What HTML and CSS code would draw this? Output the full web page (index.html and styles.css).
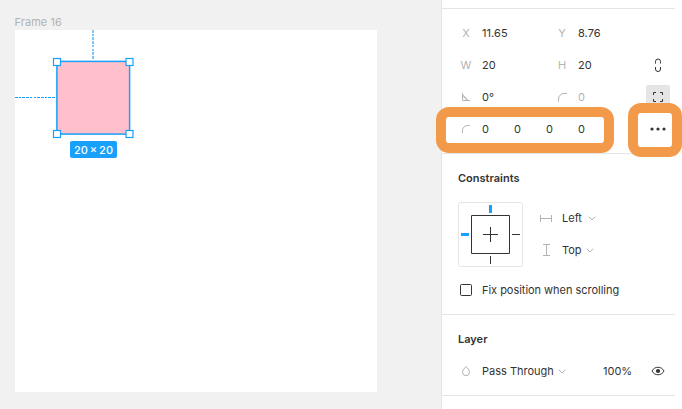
FILE: index.html
```html
<!DOCTYPE html>
<html lang="en">
<head>
<meta charset="utf-8">
<title>Frame 16</title>
<link rel="stylesheet" href="styles.css">
</head>
<body>
<div class="app">
  <main class="canvas">
    <div class="frame-name">Frame 16</div>
    <div class="frame">
      <i class="guide-v"></i>
      <i class="guide-h"></i>
      <svg class="selection" width="362" height="362">
        <rect class="shape" x="41.900" y="31.400" width="72.700" height="72.700"/>
        <rect class="handle" x="38.500" y="28.500" width="7" height="7"/>
        <rect class="handle" x="111" y="28.500" width="7" height="7"/>
        <rect class="handle" x="38.500" y="100.500" width="7" height="7"/>
        <rect class="handle" x="111" y="100.500" width="7" height="7"/>
      </svg>
      <span class="size-badge">20 × 20</span>
    </div>
  </main>
  <aside class="panel">
    <section class="section transform">
      <div class="row"><span class="label">X</span><span class="value">11.65</span><span class="label">Y</span><span class="value">8.76</span></div>
      <div class="row"><span class="label">W</span><span class="value">20</span><span class="label">H</span><span class="value">20</span>
        <span class="button"><svg width="24" height="24"><path class="dark" d="M9.5 10.500V8.500a2.500 2.500 0 0 1 5 0V10.500M9.500 14v2a2.500 2.500 0 0 0 5 0V14"/></svg></span></div>
      <div class="row"><span class="label"><svg width="10" height="10"><path class="light" d="M1.500 1V8.500H9M1.500 4.500a4 4 0 0 1 4 4M1.500 2.500L7 8.500"/></svg></span><span class="value">0°</span><span class="label"><svg width="10" height="10"><path class="light" d="M1.500 9.500V7A5.500 5.500 0 0 1 7 1.500H10"/></svg></span><span class="value muted">0</span>
        <span class="button active"><svg width="24" height="24"><path class="dark" d="M7.500 10V7.500H10M14 7.500H16.500V10M16.500 14V16.500H14M10 16.500H7.500V14"/></svg></span></div>
      <div class="row corners"><span class="label"><svg width="10" height="10"><path class="light" d="M1.500 9V6.500A5 5 0 0 1 6.500 1.500H9"/></svg></span><span class="value">0</span><span class="value">0</span><span class="value">0</span><span class="value">0</span>
        <span class="button"><svg width="24" height="24" fill="#333"><circle cx="6" cy="12" r="1.6"/><circle cx="12" cy="12" r="1.6"/><circle cx="18" cy="12" r="1.6"/></svg></span></div>
      <div class="highlight wide"></div>
      <div class="highlight small"></div>
    </section>
    <section class="section">
      <h2>Constraints</h2>
      <div class="constraints">
        <svg class="pins" width="65" height="65">
          <rect class="box" x=".5" y=".5" width="64" height="64" rx="2"/>
          <path class="dark" d="M13.500 13.500H51.500V51.500H13.500ZM25 32.500H40M32.500 25V40M54 32.500H62M32.500 54V62"/>
          <path class="pin" d="M32.500 3V11M3 32.500H11"/>
        </svg>
        <div class="axes">
          <div class="axis"><svg width="14" height="12"><path class="light" d="M1.500 3V10M12.500 3V10M1.500 6.500H12.500"/></svg><span>Left</span><svg class="chevron" width="8" height="5"><path class="light" d="M.8 .7L4 4L7.200 .7"/></svg></div>
          <div class="axis"><svg width="14" height="12"><path class="light" d="M4 .5H11M4 11.500H11M7.500 .5V11.500"/></svg><span>Top</span><svg class="chevron near" width="8" height="5"><path class="light" d="M.8 .7L4 4L7.200 .7"/></svg></div>
        </div>
      </div>
      <div class="row"><span class="checkbox"></span><span class="tight">Fix position when scrolling</span></div>
    </section>
    <section class="section">
      <h2>Layer</h2>
      <div class="row"><span class="label"><svg width="10" height="12"><path class="light" d="M5 1.500C4 3 1.500 4.800 1.500 7.200A3.500 3.500 0 0 0 8.500 7.200C8.500 4.800 6 3 5 1.500Z"/></svg></span><span>Pass Through</span><svg class="chevron near" width="8" height="5"><path class="light" d="M.8 .7L4 4L7.200 .7"/></svg>
        <span class="opacity">100%</span>
        <span class="button"><svg width="24" height="24"><path class="dark" d="M6 12C8.500 7 15.500 7 18 12C15.500 17 8.500 17 6 12Z"/><circle cx="12" cy="12" r="2.100" fill="#333"/></svg></span></div>
    </section>
  </aside>
</div>
</body>
</html>
```
FILE: styles.css
```css
* { box-sizing: border-box; }
body { margin: 0; background: #fff; color: #333; font: 11px/16px Inter, "Liberation Sans", sans-serif; overflow: hidden; }
svg { display: block; flex: none; }
.app { display: flex; width: 682px; height: 409px; }
.canvas { width: 441px; padding: 14px 0 0 15px; background: #f1f1f1; }
.frame-name { height: 16px; margin-left: -.5px; color: #b3b3b3; letter-spacing: .06px; }
.frame { position: relative; width: 362px; height: 362px; background: #fff; }
.selection { position: absolute; inset: 0; }
.guide-v { position: absolute; left: 77px; top: 0; width: 2px; height: 30px; background: repeating-linear-gradient(#7cc8fc 0 2.6px, #fff 2.6px 3.7px); }
.guide-h { position: absolute; left: 0; top: 67px; width: 41px; height: 1px; background: repeating-linear-gradient(90deg, #18a0fb 0 2.6px, #fff 2.6px 3.7px); }
.shape { fill: #ffc0cb; stroke: #18a0fb; stroke-width: 1.5; }
.handle { fill: #fff; stroke: #18a0fb; stroke-width: 1.2; }
.size-badge { position: absolute; top: 111px; left: 55px; width: 47px; height: 17px; line-height: 18px; text-align: center; border-radius: 2px; background: #18a0fb; color: #fff; font-weight: 500; word-spacing: -1px; white-space: nowrap; }
.panel { width: 234px; border-left: 1px solid #e5e5e5; padding-top: 8px; }
.section { border-top: 1px solid #e5e5e5; padding: 8px 5px 8px 8px; }
.section:last-child { border-bottom: 1px solid #e5e5e5; }
.transform { position: relative; }
.row { display: flex; align-items: center; height: 32px; }
.label { display: flex; justify-content: center; width: 32px; color: #b3b3b3; }
.value { width: 64px; letter-spacing: .06px; }
.corners .value { width: 32px; }
.corners .value:nth-last-child(2) { width: 64px; }
.muted { color: #b3b3b3; }
.tight { letter-spacing: -.03px; }
.button { margin-left: auto; width: 24px; height: 24px; border-radius: 2px; }
.active { background: #e5e5e5; }
.dark { fill: none; stroke: #333; }
.light { fill: none; stroke: #b3b3b3; }
.highlight { position: absolute; border: 10px solid #f2994a; border-radius: 13px; }
.wide { left: -6px; top: 98px; width: 178px; height: 46px; }
.small { left: 186px; top: 94px; width: 54px; height: 54px; }
h2 { margin: 0; padding-left: 8px; font-size: 11px; line-height: 32px; font-weight: 600; }
.constraints { display: flex; height: 80px; padding: 8px 0 0 8px; }
.box { fill: #fff; stroke: #e5e5e5; }
.pin { stroke: #18a0fb; stroke-width: 3; }
.axes { margin-left: 16px; }
.axis { display: flex; align-items: center; height: 32px; }
.axis span { margin-left: 9px; }
.chevron { margin: 1px 0 0 6px; }
.near { margin-left: 4px; }
.checkbox { width: 12px; height: 12px; margin: 0 10px; border: 1px solid #333; border-radius: 1.5px; }
.opacity { width: 67px; margin-left: auto; padding-left: 24px; }
.opacity + .button { margin-left: 0; }
```
